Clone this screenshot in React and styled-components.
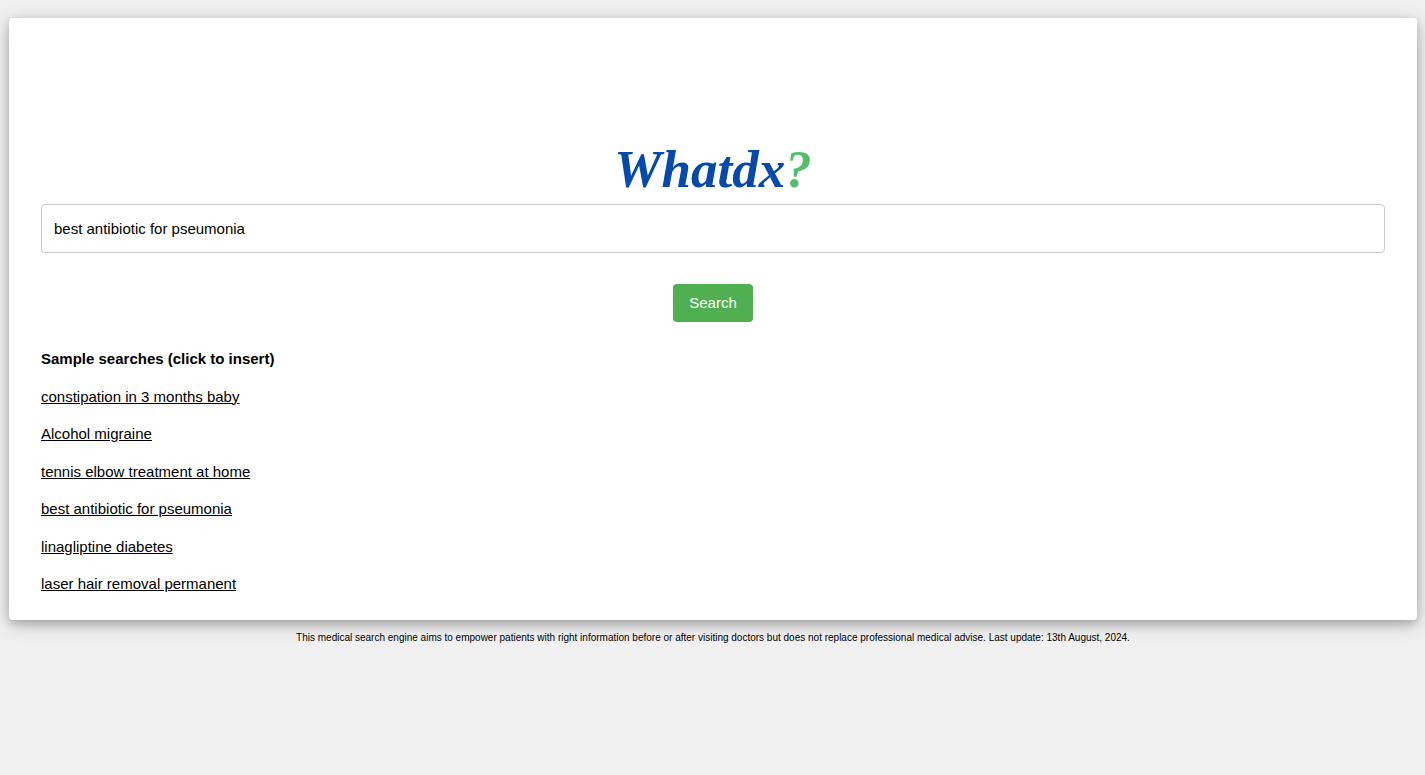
import React, { useState } from "react";
import styled, { createGlobalStyle } from "styled-components";

const GlobalStyle = createGlobalStyle`
  *, *::before, *::after { box-sizing: border-box; }
  body {
    margin: 0;
    background: #f0f0f0;
    color: #000;
    font-family: "Liberation Sans", Arial, sans-serif;
    font-size: 15px;
    line-height: 1.5;
  }
`;

const Page = styled.div`
  padding: 18px 8px 16px 9px;
`;

const Card = styled.main`
  padding: 120px 32px 24px;
  background: #fff;
  border-radius: 4px;
  box-shadow: 0 4px 10px rgba(0, 0, 0, 0.2), 0 4px 20px rgba(0, 0, 0, 0.19);
`;

const Logo = styled.h1`
  margin: 0 0 4px;
  text-align: center;
  color: #0449ab;
  font-family: "Liberation Serif", "Times New Roman", serif;
  font-size: 53px;
  font-style: italic;
  font-weight: 700;
  line-height: 62px;
`;

const LogoMark = styled.span`
  color: #53be6c;
`;

const SearchForm = styled.form`
  display: flex;
  flex-direction: column;
  align-items: center;
  gap: 31px;
`;

const SearchInput = styled.input`
  width: 100%;
  height: 49px;
  padding: 12px;
  border: 1px solid #ccc;
  border-radius: 4px;
  background: #fff;
  color: #000;
  font: inherit;
`;

const SearchButton = styled.button`
  height: 38px;
  padding: 8px 16px;
  border: 0;
  border-radius: 4px;
  background: #50af50;
  color: #fff;
  font: inherit;
  cursor: pointer;
`;

const Samples = styled.section`
  margin-top: 26px;
`;

const SamplesTitle = styled.h2`
  margin: 0;
  font-size: 15px;
  font-weight: 700;
`;

const SampleList = styled.ul`
  margin: 0;
  padding: 0;
  list-style: none;
`;

const SampleItem = styled.li`
  margin-top: 15px;
`;

const SampleLink = styled.a`
  color: inherit;
  text-decoration: underline;
`;

const Disclaimer = styled.footer`
  margin-top: 10px;
  text-align: center;
  font-size: 10px;
`;

const samples = [
  "constipation in 3 months baby",
  "Alcohol migraine",
  "tennis elbow treatment at home",
  "best antibiotic for pseumonia",
  "linagliptine diabetes",
  "laser hair removal permanent",
];

export default function App() {
  const [query, setQuery] = useState("best antibiotic for pseumonia");

  const insert = (event, text) => {
    event.preventDefault();
    setQuery(text);
  };

  return (
    <>
      <GlobalStyle />
      <Page>
        <Card>
          <Logo>
            Whatdx<LogoMark>?</LogoMark>
          </Logo>
          <SearchForm role="search" onSubmit={(event) => event.preventDefault()}>
            <SearchInput
              type="text"
              name="q"
              aria-label="Search"
              value={query}
              onChange={(event) => setQuery(event.target.value)}
            />
            <SearchButton type="submit">Search</SearchButton>
          </SearchForm>
          <Samples>
            <SamplesTitle>Sample searches (click to insert)</SamplesTitle>
            <SampleList>
              {samples.map((text) => (
                <SampleItem key={text}>
                  <SampleLink href="#" onClick={(event) => insert(event, text)}>
                    {text}
                  </SampleLink>
                </SampleItem>
              ))}
            </SampleList>
          </Samples>
        </Card>
        <Disclaimer>
          This medical search engine aims to empower patients with right information before or after
          visiting doctors but does not replace professional medical advise. Last update: 13th
          August, 2024.
        </Disclaimer>
      </Page>
    </>
  );
}
